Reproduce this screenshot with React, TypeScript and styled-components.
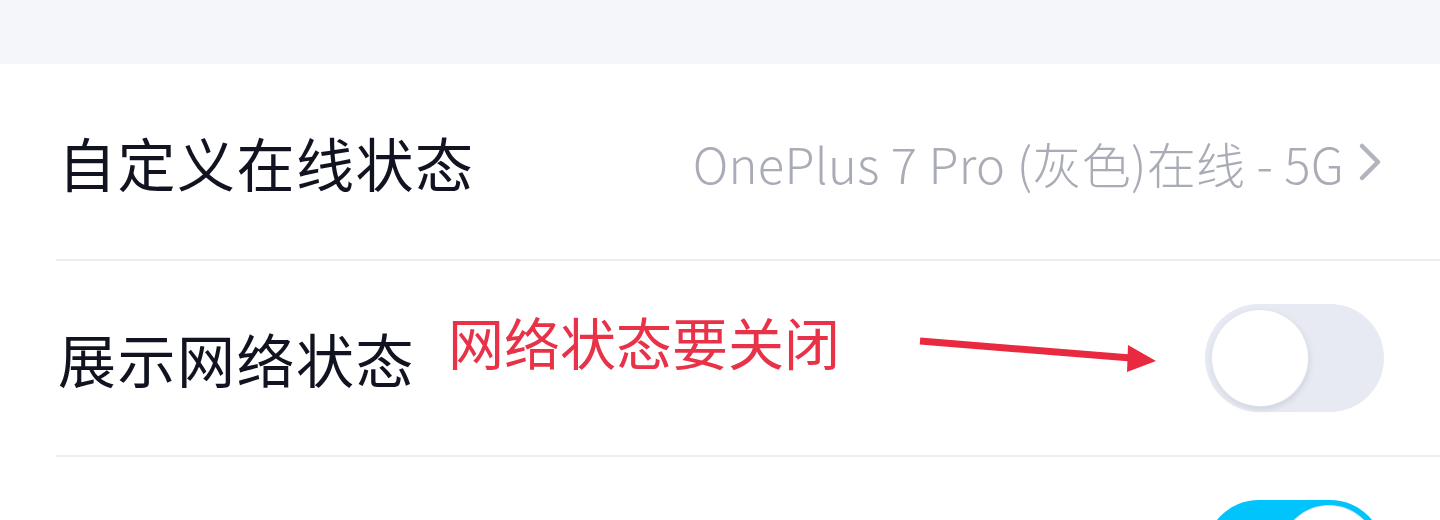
import * as React from 'react'
import styled, { createGlobalStyle } from 'styled-components'

const GlobalStyle = createGlobalStyle`
  html, body {
    margin: 0;
    padding: 0;
    background: #ffffff;
    font-family: "Noto Sans CJK SC", "Noto Sans", sans-serif;
  }
`

const Page = styled.div`
  width: 1440px;
  height: 520px;
  overflow: hidden;
  background: #ffffff;
`

const TopBand = styled.div`
  height: 64px;
  background: #f5f6fa;
`

const List = styled.div`
  display: flex;
  flex-direction: column;
`

const Row = styled.div<{ last?: boolean }>`
  display: flex;
  align-items: center;
  height: 196px;
  padding: 0 56px 0 58px;
  position: relative;

  &:after {
    content: '';
    display: ${(p) => (p.last ? 'none' : 'block')};
    position: absolute;
    left: 56px;
    right: 0;
    bottom: -1px;
    height: 2px;
    background: #ecedef;
  }
`

const Label = styled.span`
  font-size: 58px;
  line-height: 1;
  color: #111420;
  letter-spacing: 1.5px;
  white-space: nowrap;
`

const Value = styled.span`
  margin-left: auto;
  font-size: 49px;
  font-weight: 300;
  line-height: 1;
  color: #a9acb6;
  letter-spacing: 0.3px;
  white-space: nowrap;
`

const Chevron = styled.svg`
  width: 26px;
  height: 40px;
  margin-left: 12px;
  margin-right: 2px;
  flex-shrink: 0;
`

const Annotation = styled.span`
  margin-left: 33px;
  margin-bottom: 34px;
  font-size: 56px;
  line-height: 1;
  color: #e83248;
  white-space: nowrap;
`

const Arrow = styled.svg`
  width: 250px;
  height: 50px;
  margin-left: 76px;
  margin-bottom: 8px;
  flex-shrink: 0;
`

const Track = styled.div<{ on?: boolean }>`
  margin-left: auto;
  width: 179px;
  height: 108px;
  border-radius: 54px;
  background: ${(p) => (p.on ? '#00c4fb' : '#e8eaf3')};
  display: flex;
  align-items: center;
  justify-content: ${(p) => (p.on ? 'flex-end' : 'flex-start')};
  padding: 0 7px;
  box-sizing: border-box;
  flex-shrink: 0;
`

const Knob = styled.div`
  width: 96px;
  height: 96px;
  border-radius: 50%;
  background: #ffffff;
  box-shadow: 0 0 0 1px #e2e4ec, 1px 3px 6px rgba(120, 126, 150, 0.25);
`

const Toggle = ({ on }: { on?: boolean }) => (
  <Track on={on}>
    <Knob />
  </Track>
)

export default function App() {
  return (
    <Page>
      <GlobalStyle />
      <TopBand />
      <List>
        <Row>
          <Label>自定义在线状态</Label>
          <Value>OnePlus 7 Pro (灰色)在线 - 5G</Value>
          <Chevron viewBox="0 0 26 40">
            <path
              d="M6 4 L22 20 L6 36"
              fill="none"
              stroke="#b1b4bd"
              strokeWidth="4.5"
              strokeLinecap="round"
              strokeLinejoin="round"
            />
          </Chevron>
        </Row>
        <Row>
          <Label>展示网络状态</Label>
          <Annotation>网络状态要关闭</Annotation>
          <Arrow viewBox="0 0 250 50">
            <line x1="4" y1="12" x2="215" y2="29" stroke="#e8293f" strokeWidth="7" />
            <polygon points="212,16 240,32 211,43" fill="#e8293f" />
          </Arrow>
          <Toggle />
        </Row>
        <Row last>
          <Label></Label>
          <Toggle on />
        </Row>
      </List>
    </Page>
  )
}
